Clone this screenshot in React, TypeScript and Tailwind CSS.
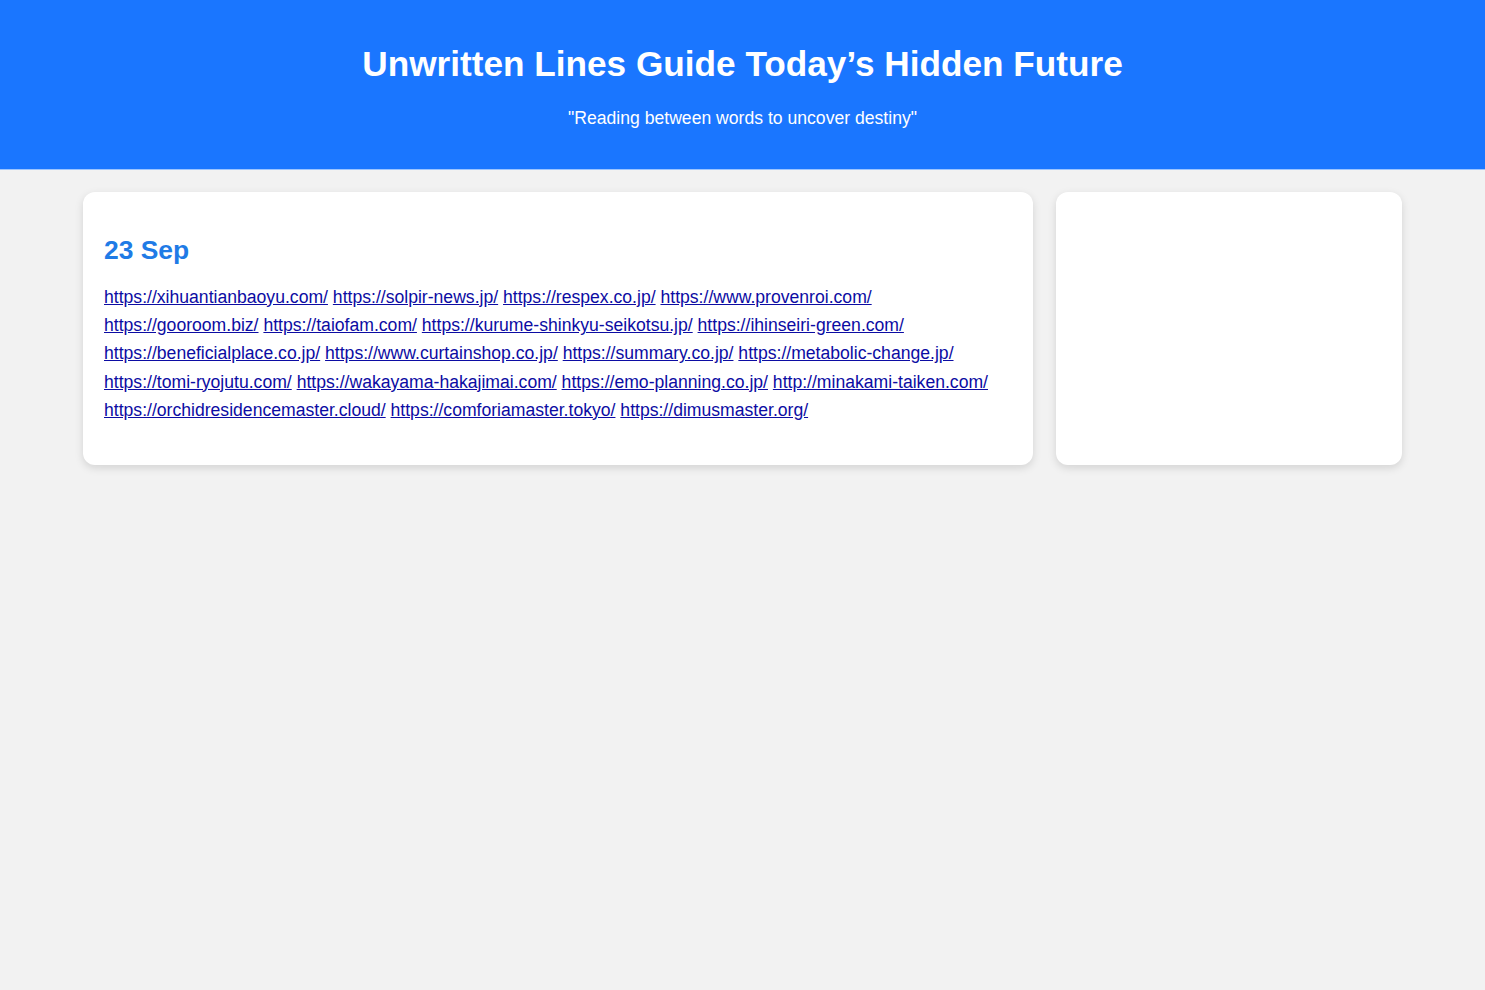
import React from 'react';

// Links listed under the date heading
const links = [
  'https://xihuantianbaoyu.com/',
  'https://solpir-news.jp/',
  'https://respex.co.jp/',
  'https://www.provenroi.com/',
  'https://gooroom.biz/',
  'https://taiofam.com/',
  'https://kurume-shinkyu-seikotsu.jp/',
  'https://ihinseiri-green.com/',
  'https://beneficialplace.co.jp/',
  'https://www.curtainshop.co.jp/',
  'https://summary.co.jp/',
  'https://metabolic-change.jp/',
  'https://tomi-ryojutu.com/',
  'https://wakayama-hakajimai.com/',
  'https://emo-planning.co.jp/',
  'http://minakami-taiken.com/',
  'https://orchidresidencemaster.cloud/',
  'https://comforiamaster.tokyo/',
  'https://dimusmaster.org/'
];

export default function App() {
  return (
    <div className="min-h-screen bg-[#f2f2f2] text-[17.6px] font-['Liberation_Sans',Arial,sans-serif]">
      {/* Header */}
      <header className="bg-[#1a76ff] text-white text-center pt-[44px] pb-[41px] border-b border-[#9cc4ff]">
        <h1 className="text-[35.2px] font-bold leading-[40px]">
          Unwritten Lines Guide Today’s Hidden Future
        </h1>
        <p className="mt-[24px] leading-[20px]">"Reading between words to uncover destiny"</p>
      </header>

      {/* Content */}
      <main className="max-w-[1319px] mx-auto mt-[22px] flex gap-[23px]">
        <section className="flex-1 bg-white rounded-[12px] shadow-[0_3px_8px_rgba(0,0,0,0.13)] px-[21px] pt-[43px] pb-[41px]">
          <h2 className="text-[26.4px] font-bold text-[#1f7be6] leading-[31px]">23 Sep</h2>
          <p className="mt-[17px] leading-[28.2px]">
            {links.map((url, i) => (
              <React.Fragment key={url}>
                <a href={url} className="text-[#0c0ca3] underline">
                  {url}
                </a>
                {i < links.length - 1 ? ' ' : null}
              </React.Fragment>
            ))}
          </p>
        </section>
        <aside className="w-[346px] bg-white rounded-[12px] shadow-[0_3px_8px_rgba(0,0,0,0.13)]" />
      </main>
    </div>
  );
}
